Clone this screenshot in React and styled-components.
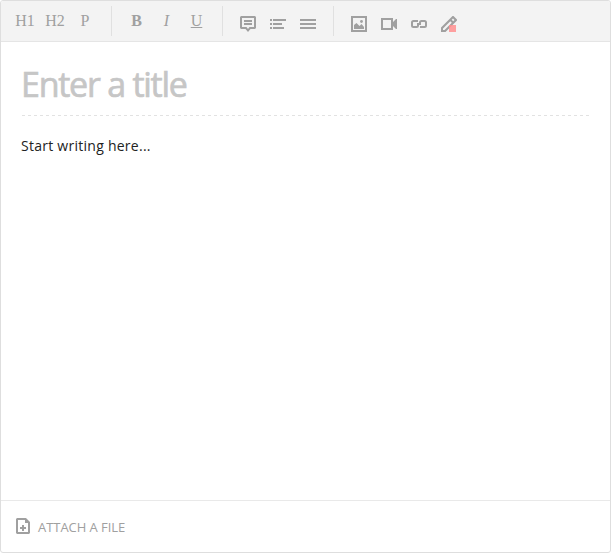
import React from "react";
import styled, { createGlobalStyle } from "styled-components";

const GlobalStyle = createGlobalStyle`
  * { box-sizing: border-box; }
  body { margin: 0; background: #fff; }
`;

const Editor = styled.main`
  display: flex;
  flex-direction: column;
  width: 611px;
  height: 553px;
  border: 1px solid #dedede;
  border-radius: 3px;
  background: #fff;
  overflow: hidden;
  font-family: "Open Sans", sans-serif;
`;

const Toolbar = styled.div`
  display: flex;
  flex: none;
  height: 41px;
  padding-top: 5px;
  background: #f3f3f3;
  border-bottom: 1px solid #e5e5e5;
`;

const Group = styled.div`
  display: flex;
  height: 30px;
  padding: 0 10px;
  & + & { border-left: 1px solid #e0e0e0; }
  &:first-child { padding-left: 9px; padding-right: 11px; }
`;

const ToolButton = styled.button`
  width: 30px;
  height: 30px;
  padding: 0;
  border: 0;
  background: none;
  color: #a0a0a0;
  font: ${(p) => p.$italic ? "italic" : "normal"} ${(p) => p.$bold ? 700 : 400} 16px/30px "Liberation Serif", serif;
  text-decoration: ${(p) => p.$underline ? "underline" : "none"};
  text-indent: ${(p) => p.$bold || p.$italic || p.$underline ? "-1px" : "0"};
`;

const IconButton = styled(ToolButton)`
  display: flex;
  justify-content: center;
  padding-top: 10px;
`;

const Icon = styled.svg`
  display: block;
  flex: none;
  width: ${(p) => p.$width || 16}px;
  height: 16px;
  fill: #a0a0a0;
`;

const Content = styled.section`
  flex: 1;
  padding: 20px 20px 0;
`;

const Title = styled.h1`
  height: 54px;
  margin: 0;
  color: #c6c6c6;
  font-size: 34px;
  font-weight: 400;
  line-height: 45px;
  letter-spacing: -1.25px;
  -webkit-text-stroke: 0.7px #c6c6c6;
  background: repeating-linear-gradient(90deg, #e2e2e2 0 3px, transparent 3px 6px) 1px 100% / 100% 1px no-repeat;
`;

const Body = styled.p`
  margin: 20px 0 0;
  color: #222;
  font-size: 14px;
  line-height: 20px;
  letter-spacing: 0.26px;
`;

const Footer = styled.footer`
  display: flex;
  flex: none;
  height: 52px;
  padding: 17px 15px 0;
  border-top: 1px solid #e9e9e9;
`;

const AttachButton = styled.button`
  display: flex;
  gap: 8px;
  height: 18px;
  padding: 0;
  border: 0;
  background: none;
  color: #a0a0a0;
  font: 400 13px/18px "Open Sans", sans-serif;
  letter-spacing: -0.05px;
`;

function CommentIcon() {
  return <Icon viewBox="0 0 16 16"><path fillRule="evenodd" d="M1 0H15L16 1V12L15 13H10.5L8 16L5.5 13H1L0 12V1ZM2 2V11H6.5L8 13L9.5 11H14V2ZM4 4H12V6H4ZM4 7H12V9H4Z" /></Icon>;
}
function ListIcon() {
  return <Icon viewBox="0 0 16 16"><path d="M0 3H2V5H0ZM3 3H16V5H3ZM0 7H2V9H0ZM3 7H12V9H3ZM0 11H2V13H0ZM3 11H14V13H3Z" /></Icon>;
}
function LinesIcon() {
  return <Icon viewBox="0 0 16 16"><path d="M0 3H16V5H0ZM0 7H16V9H0ZM0 11H16V13H0Z" /></Icon>;
}
function ImageIcon() {
  return <Icon viewBox="0 0 16 16"><path fillRule="evenodd" d="M0 0H16V16H0ZM2 2V14H14V2ZM3 13V9L5.5 7L8.5 10L10.5 8L13 11V13Z" /><circle cx="10.5" cy="5.5" r="1.4" /></Icon>;
}
function VideoIcon() {
  return <Icon viewBox="0 0 16 16"><path fillRule="evenodd" d="M0 2H12V6L15 3H16V13H15L12 10V14H0ZM2 4V12H10V4Z" /></Icon>;
}
function LinkIcon() {
  return <Icon viewBox="0 0 16 16"><path fill="none" stroke="#a0a0a0" strokeWidth="2" d="M7 5H2.5Q1 5 1 6.5V9.5Q1 11 2.5 11H5.5Q7 11 7 9.5V8H10M9 11H13.5Q15 11 15 9.5V6.5Q15 5 13.5 5H10.5Q9 5 9 6.5V8H6" /></Icon>;
}
function PencilIcon() {
  return <Icon viewBox="0 0 16 16"><path fillRule="evenodd" d="M0 16V11.5L11.5 0H12.5L16 3.5V4.5L4.5 16ZM2 12.5V14H3.5L10.8 6.7L9.3 5.2ZM10.7 3.8L12.2 5.3L13.5 4L12 2.5Z" /><path fill="#ff8f8f" fillOpacity="0.85" d="M8 9H15V16H8Z" /></Icon>;
}
function FileIcon() {
  return <Icon $width={14} viewBox="0 0 14 16"><path fillRule="evenodd" d="M1 0H10L14 4V15L13 16H1L0 15V1ZM2 2V14H12V5H9V2ZM6 7H8V9H10V11H8V13H6V11H4V9H6Z" /></Icon>;
}

export default function App() {
  return (
    <>
      <GlobalStyle />
      <Editor>
        <Toolbar>
          <Group>
            <ToolButton>H1</ToolButton>
            <ToolButton>H2</ToolButton>
            <ToolButton>P</ToolButton>
          </Group>
          <Group>
            <ToolButton $bold>B</ToolButton>
            <ToolButton $italic>I</ToolButton>
            <ToolButton $underline>U</ToolButton>
          </Group>
          <Group>
            <IconButton aria-label="Quote"><CommentIcon /></IconButton>
            <IconButton aria-label="List"><ListIcon /></IconButton>
            <IconButton aria-label="Justify"><LinesIcon /></IconButton>
          </Group>
          <Group>
            <IconButton aria-label="Image"><ImageIcon /></IconButton>
            <IconButton aria-label="Video"><VideoIcon /></IconButton>
            <IconButton aria-label="Link"><LinkIcon /></IconButton>
            <IconButton aria-label="Color"><PencilIcon /></IconButton>
          </Group>
        </Toolbar>
        <Content>
          <Title>Enter a title</Title>
          <Body>Start writing here...</Body>
        </Content>
        <Footer>
          <AttachButton><FileIcon />ATTACH A FILE</AttachButton>
        </Footer>
      </Editor>
    </>
  );
}
